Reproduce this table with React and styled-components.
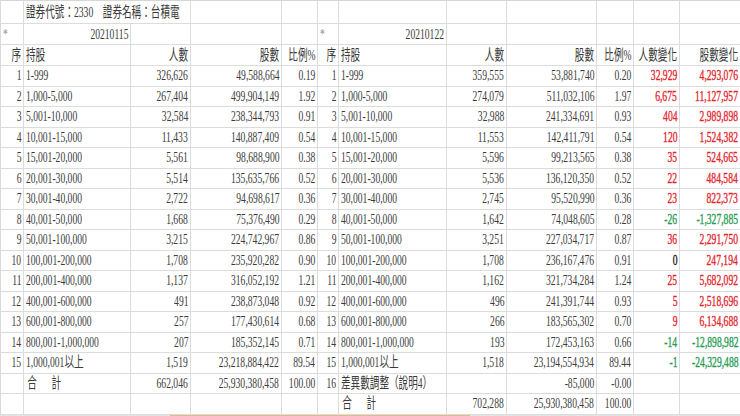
import React from 'react';
import styled, { createGlobalStyle } from 'styled-components';

const GlobalStyle = createGlobalStyle`
  html, body {
    margin: 0;
    padding: 0;
    background: #ffffff;
    overflow: hidden;
  }
  body {
    font-family: 'Liberation Serif', 'Noto Sans CJK TC', serif;
  }
`

const RED = '#e3242d';
const GREEN = '#1f9a52';

const left = [
  ['1', '1-999', '326,626', '49,588,664', '0.19'],
  ['2', '1,000-5,000', '267,404', '499,904,149', '1.92'],
  ['3', '5,001-10,000', '32,584', '238,344,793', '0.91'],
  ['4', '10,001-15,000', '11,433', '140,887,409', '0.54'],
  ['5', '15,001-20,000', '5,561', '98,688,900', '0.38'],
  ['6', '20,001-30,000', '5,514', '135,635,766', '0.52'],
  ['7', '30,001-40,000', '2,722', '94,698,617', '0.36'],
  ['8', '40,001-50,000', '1,668', '75,376,490', '0.29'],
  ['9', '50,001-100,000', '3,215', '224,742,967', '0.86'],
  ['10', '100,001-200,000', '1,708', '235,920,282', '0.90'],
  ['11', '200,001-400,000', '1,137', '316,052,192', '1.21'],
  ['12', '400,001-600,000', '491', '238,873,048', '0.92'],
  ['13', '600,001-800,000', '257', '177,430,614', '0.68'],
  ['14', '800,001-1,000,000', '207', '185,352,145', '0.71'],
  ['15', '1,000,001以上', '1,519', '23,218,884,422', '89.54'],
  ['', '合　計', '662,046', '25,930,380,458', '100.00'],
  ['', '', '', '', ''],
];

const right = [
  ['1', '1-999', '359,555', '53,881,740', '0.20', '32,929', '4,293,076'],
  ['2', '1,000-5,000', '274,079', '511,032,106', '1.97', '6,675', '11,127,957'],
  ['3', '5,001-10,000', '32,988', '241,334,691', '0.93', '404', '2,989,898'],
  ['4', '10,001-15,000', '11,553', '142,411,791', '0.54', '120', '1,524,382'],
  ['5', '15,001-20,000', '5,596', '99,213,565', '0.38', '35', '524,665'],
  ['6', '20,001-30,000', '5,536', '136,120,350', '0.52', '22', '484,584'],
  ['7', '30,001-40,000', '2,745', '95,520,990', '0.36', '23', '822,373'],
  ['8', '40,001-50,000', '1,642', '74,048,605', '0.28', '-26', '-1,327,885'],
  ['9', '50,001-100,000', '3,251', '227,034,717', '0.87', '36', '2,291,750'],
  ['10', '100,001-200,000', '1,708', '236,167,476', '0.91', '0', '247,194'],
  ['11', '200,001-400,000', '1,162', '321,734,284', '1.24', '25', '5,682,092'],
  ['12', '400,001-600,000', '496', '241,391,744', '0.93', '5', '2,518,696'],
  ['13', '600,001-800,000', '266', '183,565,302', '0.70', '9', '6,134,688'],
  ['14', '800,001-1,000,000', '193', '172,453,163', '0.66', '-14', '-12,898,982'],
  ['15', '1,000,001以上', '1,518', '23,194,554,934', '89.44', '-1', '-24,329,488'],
  ['16', '差異數調整（說明4）', '', '-85,000', '-0.00', '', ''],
  ['', '合　計', '702,288', '25,930,380,458', '100.00', '', ''],
];

function changeColor(v) {
  if (!v) return undefined;
  if (v === '0') return '#111111';
  return v.startsWith('-') ? GREEN : RED;
}

export default function App() {
  return (
    <>
      <GlobalStyle />
      <Sheet>
        <Cell />
        <Cell $span={2}><Txt>證券代號：2330　證券名稱：台積電</Txt></Cell>
        {Array.from({ length: 9 }).map((_, i) => <Cell key={'t' + i} />)}

        <Cell><Txt $muted>*</Txt></Cell>
        <Cell $align="right"><Txt>20210115</Txt></Cell>
        <Cell /><Cell /><Cell />
        <Cell><Txt $muted>*</Txt></Cell>
        <Cell $align="right"><Txt>20210122</Txt></Cell>
        <Cell /><Cell /><Cell /><Cell /><Cell />

        <Cell $align="right"><Txt>序</Txt></Cell>
        <Cell><Txt>持股</Txt></Cell>
        <Cell $align="right"><Txt>人數</Txt></Cell>
        <Cell $align="right"><Txt>股數</Txt></Cell>
        <Cell $align="right"><Txt>比例%</Txt></Cell>
        <Cell $align="right"><Txt>序</Txt></Cell>
        <Cell><Txt>持股</Txt></Cell>
        <Cell $align="right"><Txt>人數</Txt></Cell>
        <Cell $align="right"><Txt>股數</Txt></Cell>
        <Cell $align="right"><Txt>比例%</Txt></Cell>
        <Cell $align="right"><Txt>人數變化</Txt></Cell>
        <Cell $align="right"><Txt>股數變化</Txt></Cell>

        {left.map((l, i) => {
          const r = right[i];
          return (
            <React.Fragment key={i}>
              <Cell $align="right"><Txt>{l[0]}</Txt></Cell>
              <Cell><Txt $wide={l[1] === '合　計'}>{l[1]}</Txt></Cell>
              <Cell $align="right"><Txt>{l[2]}</Txt></Cell>
              <Cell $align="right"><Txt>{l[3]}</Txt></Cell>
              <Cell $align="right"><Txt>{l[4]}</Txt></Cell>
              <Cell $align="right"><Txt>{r[0]}</Txt></Cell>
              <Cell><Txt $wide={r[1] === '合　計'}>{r[1]}</Txt></Cell>
              <Cell $align="right"><Txt>{r[2]}</Txt></Cell>
              <Cell $align="right"><Txt>{r[3]}</Txt></Cell>
              <Cell $align="right"><Txt>{r[4]}</Txt></Cell>
              <Cell $align="right"><Txt $color={changeColor(r[5])}>{r[5]}</Txt></Cell>
              <Cell $align="right"><Txt $color={changeColor(r[6])}>{r[6]}</Txt></Cell>
            </React.Fragment>
          );
        })}
      </Sheet>
      <BottomBar>
        <BarPart $w={170} />
        <BarPart $w={300} $hot />
        <BarPart $w={270} />
      </BottomBar>
    </>
  );
}

const Sheet = styled.div`
  display: grid;
  grid-template-columns: 23px 107px 60px 91px 36px 21px 108px 60px 90px 37px 46px 61px;
  grid-template-rows: 23px 21px 21px repeat(17, 20.5px);
  width: 740px;
  border-top: 1px solid #d6d6d6;
  border-left: 1px solid #dadada;
  box-sizing: border-box;
  font-size: 15px;
  color: #3a3a3a;
`
const Cell = styled.div`
  display: flex;
  align-items: center;
  justify-content: ${p => (p.$align === 'right' ? 'flex-end' : 'flex-start')};
  grid-column: span ${p => p.$span || 1};
  padding: 0 2px;
  border-right: 1px solid #dcdcdc;
  border-bottom: 1px solid #dcdcdc;
  box-sizing: border-box;
  white-space: nowrap;
  overflow: visible;
  min-width: 0;
  ${p => p.$align === 'right' ? '--origin: right center;' : '--origin: left center;'}
`
const Txt = styled.span`
  display: inline-block;
  transform: scaleX(0.64);
  transform-origin: var(--origin);
  line-height: 1;
  color: ${p => p.$color || (p.$muted ? '#8a8a8a' : 'inherit')};
  -webkit-text-stroke: ${p => (p.$color ? '0.35px' : '0')};
  letter-spacing: ${p => (p.$wide ? '4px' : '0')};
  padding-left: ${p => (p.$wide ? '2px' : '0')};
`
const BottomBar = styled.div`
  display: flex;
  height: 3px;
  width: 740px;
`
const BarPart = styled.div`
  width: ${p => p.$w}px;
  background: ${p => (p.$hot ? '#e9b68c' : '#e4e4e4')};
`
